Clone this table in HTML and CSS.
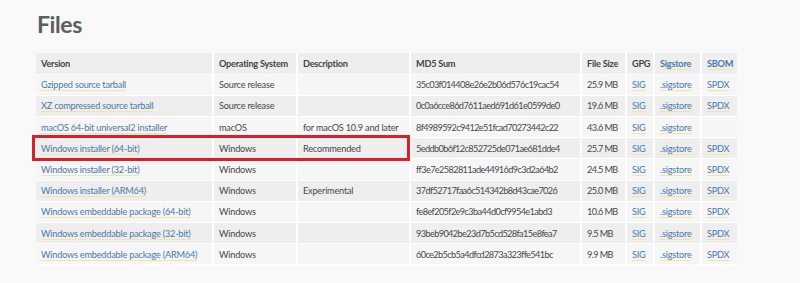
FILE: index.html
```html
<!DOCTYPE html>
<html lang="en">
<head>
<meta charset="utf-8">
<title>Files</title>
<link rel="stylesheet" href="styles.css">
</head>
<body>
<main class="page">
  <h1 class="title">Files</h1>
  <table class="files">
    <colgroup>
      <col class="c-version"><col class="c-os"><col class="c-desc"><col class="c-md5">
      <col class="c-size"><col class="c-gpg"><col class="c-sig"><col class="c-sbom">
    </colgroup>
    <thead>
      <tr>
        <th>Version</th><th>Operating System</th><th>Description</th><th>MD5 Sum</th>
        <th>File Size</th><th>GPG</th><th><a href="#">Sigstore</a></th><th><a href="#">SBOM</a></th>
      </tr>
    </thead>
    <tbody>
      <tr><td><a href="#">Gzipped source tarball</a></td><td>Source release</td><td></td><td class="num">35c03f014408e26e2b06d576c19cac54</td><td class="num">25.9 MB</td><td><a href="#">SIG</a></td><td><a href="#">.sigstore</a></td><td><a href="#">SPDX</a></td></tr>
      <tr><td><a href="#">XZ compressed source tarball</a></td><td>Source release</td><td></td><td class="num">0c0a6cce86d7611aed691d61e0599de0</td><td class="num">19.6 MB</td><td><a href="#">SIG</a></td><td><a href="#">.sigstore</a></td><td><a href="#">SPDX</a></td></tr>
      <tr><td><a href="#">macOS 64-bit universal2 installer</a></td><td>macOS</td><td>for macOS 10.9 and later</td><td class="num">8f4989592c9412e51fcad70273442c22</td><td class="num">43.6 MB</td><td><a href="#">SIG</a></td><td><a href="#">.sigstore</a></td><td></td></tr>
      <tr class="marked"><td><a href="#">Windows installer (64-bit)</a><span class="mark"></span></td><td>Windows</td><td>Recommended</td><td class="num">5eddb0b6f12c852725de071ae681dde4</td><td class="num">25.7 MB</td><td><a href="#">SIG</a></td><td><a href="#">.sigstore</a></td><td><a href="#">SPDX</a></td></tr>
      <tr><td><a href="#">Windows installer (32-bit)</a></td><td>Windows</td><td></td><td class="num">ff3e7e2582811ade44916d9c3d2a64b2</td><td class="num">24.5 MB</td><td><a href="#">SIG</a></td><td><a href="#">.sigstore</a></td><td><a href="#">SPDX</a></td></tr>
      <tr><td><a href="#">Windows installer (ARM64)</a></td><td>Windows</td><td>Experimental</td><td class="num">37df52717faa6c514342b8d43cae7026</td><td class="num">25.0 MB</td><td><a href="#">SIG</a></td><td><a href="#">.sigstore</a></td><td><a href="#">SPDX</a></td></tr>
      <tr><td><a href="#">Windows embeddable package (64-bit)</a></td><td>Windows</td><td></td><td class="num">fe8ef205f2e9c3ba44d0cf9954e1abd3</td><td class="num">10.6 MB</td><td><a href="#">SIG</a></td><td><a href="#">.sigstore</a></td><td><a href="#">SPDX</a></td></tr>
      <tr><td><a href="#">Windows embeddable package (32-bit)</a></td><td>Windows</td><td></td><td class="num">93beb9042be23d7b5cd528fa15e8fea7</td><td class="num">9.5 MB</td><td><a href="#">SIG</a></td><td><a href="#">.sigstore</a></td><td><a href="#">SPDX</a></td></tr>
      <tr><td><a href="#">Windows embeddable package (ARM64)</a></td><td>Windows</td><td></td><td class="num">60ce2b5cb5a4dfcd2873a323ffe541bc</td><td class="num">9.9 MB</td><td><a href="#">SIG</a></td><td><a href="#">.sigstore</a></td><td><a href="#">SPDX</a></td></tr>
    </tbody>
  </table>
</main>
</body>
</html>
```

FILE: styles.css
```css
html, body {
  margin: 0;
  padding: 0;
  background: #f9f9f9;
}
body {
  font-family: "Lato", "Liberation Sans", sans-serif;
  color: #484848;
}
.page {
  padding: 10px 0 0 36px;
}
.title {
  margin: 0 0 0 1px;
  font-size: 23px;
  line-height: 28px;
  font-weight: 700;
  color: #5e5e5e;
  letter-spacing: -0.4px;
}
.files {
  margin-top: 15px;
  border-collapse: collapse;
  table-layout: fixed;
  width: 701px;
  font-size: 9.2px;
}
.c-version { width: 177px; }
.c-os { width: 84px; }
.c-desc { width: 113px; }
.c-md5 { width: 171px; }
.c-size { width: 45px; }
.c-gpg { width: 28px; }
.c-sig { width: 47px; }
.c-sbom { width: 36px; }
.files th,
.files td {
  height: 21.2px;
  padding: 0 0 0 5px;
  text-align: left;
  white-space: nowrap;
  border-right: 2px solid #fff;
  border-bottom: 1px solid #fff;
  box-sizing: border-box;
  letter-spacing: -0.22px;
}
.files th:last-child,
.files td:last-child {
  border-right: 0;
}
.files th {
  font-weight: 700;
  color: #444;
  background: #eeeeee;
  letter-spacing: -0.25px;
}
.files td.num {
  letter-spacing: -0.62px;
}
.files tbody tr:nth-child(odd) td { background: #f6f6f6; }
.files tbody tr:nth-child(even) td { background: #eeeeee; }
.files a {
  color: #4a78ad;
  text-decoration: none;
  border-bottom: 1px solid #f3e3a4;
}
.marked td:first-child {
  position: relative;
}
.mark {
  position: absolute;
  left: -4px;
  top: -3px;
  width: 378px;
  height: 26px;
  border: 3px solid #d9202a;
  box-sizing: border-box;
  pointer-events: none;
}
```
